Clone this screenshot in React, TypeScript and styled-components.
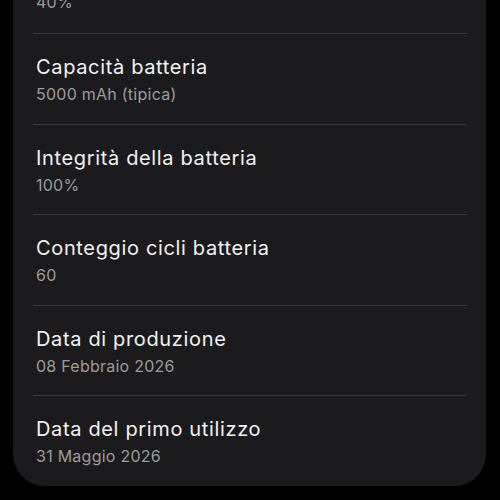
import React from "react";
import styled, { createGlobalStyle } from "styled-components";

const Global = createGlobalStyle`
  html, body { margin: 0; padding: 0; background: #000; }
  body { font-family: Inter, Roboto, "Noto Sans", sans-serif; -webkit-font-smoothing: antialiased; }
`;

const Screen = styled.div`
  width: 500px;
  height: 500px;
  overflow: hidden;
  background: #000;
`;

const Card = styled.div`
  margin: -8.5px 14px 0 13px;
  background: #1b1b1d;
  border-radius: 0 0 32px 32px;
  display: flex;
  flex-direction: column;
`;

const Row = styled.div<{ $first?: boolean }>`
  display: flex;
  flex-direction: column;
  gap: 5px;
  padding: ${(p) => (p.$first ? "0 24px 21.5px 23px" : "21px 24px 19.5px 23px")};
`;

const Title = styled.div`
  font-size: 20px;
  line-height: 24px;
  letter-spacing: 0.65px;
  color: #f3f3f3;
`;

const Value = styled.div`
  font-size: 16px;
  line-height: 20px;
  letter-spacing: 0.25px;
  color: #9c9c9c;
`;

const Divider = styled.div`
  height: 1px;
  margin: 0 19px 0 20px;
  background: #3a3a3c;
`;

const items = [
  { title: "Capacità batteria", value: "5000 mAh (tipica)" },
  { title: "Integrità della batteria", value: "100%" },
  { title: "Conteggio cicli batteria", value: "60" },
  { title: "Data di produzione", value: "08 Febbraio 2026" },
  { title: "Data del primo utilizzo", value: "31 Maggio 2026" },
];

export default function App() {
  return (
    <Screen>
      <Global />
      <Card>
        <Row $first>
          <Value>40%</Value>
        </Row>
        {items.map((it) => (
          <React.Fragment key={it.title}>
            <Divider />
            <Row>
              <Title>{it.title}</Title>
              <Value>{it.value}</Value>
            </Row>
          </React.Fragment>
        ))}
      </Card>
    </Screen>
  );
}
